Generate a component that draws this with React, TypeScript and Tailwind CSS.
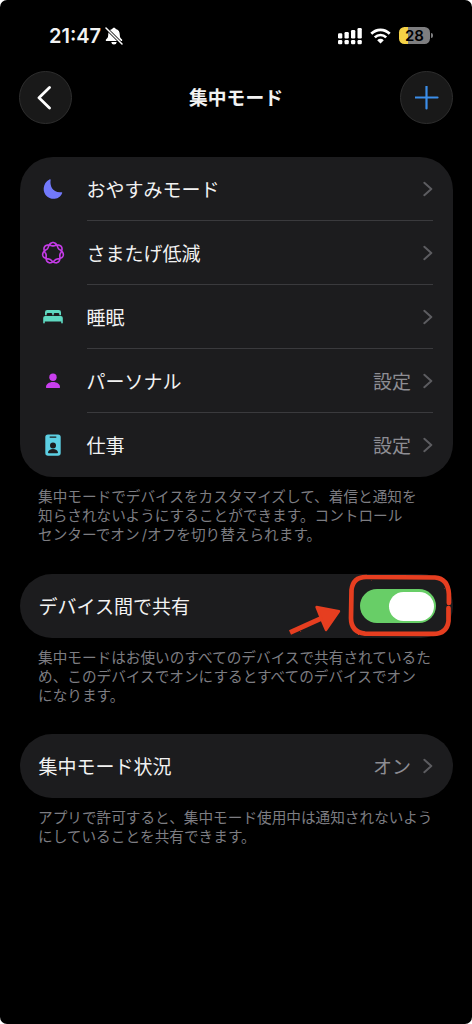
import type { ReactNode } from "react"

interface RowProps {
  icon: ReactNode
  label: string
  value?: string
  last?: boolean
}

// Closed curve that winds twice around the centre and makes seven lobes
function lobePath() {
  const points: string[] = []
  for (let i = 0; i < 240; i++) {
    const t = (i / 240) * Math.PI * 4
    const r = 8.8 + 1.7 * Math.cos(3.5 * t)
    points.push(`${(12 + r * Math.sin(t)).toFixed(2)} ${(12 - r * Math.cos(t)).toFixed(2)}`)
  }
  return `M${points.join("L")}Z`
}

function Chevron() {
  return (
    <svg className="h-4 w-[10px]" viewBox="0 0 10 16" fill="none">
      <path d="M1.3 1.8 8.3 8 1.3 14.2" stroke="#5c5c60" strokeWidth="2" strokeLinecap="round" strokeLinejoin="round" />
    </svg>
  )
}

function MoonIcon() {
  return (
    <svg className="h-6 w-6" viewBox="0 0 24 24" fill="#7279fb">
      <path d="M9.7 2.8C8.5 8.9 11.7 16.2 20.6 15.2c.5-.1.8.3.6.7C18.6 22.6 10.5 23.2 6.400 19.800 0.900 15.400 1.400 6 8.500 2.400c.6-.3 1.300-.1 1.200.4Z" />
    </svg>
  )
}

function FlowerIcon() {
  return (
    <svg className="h-6 w-6" viewBox="0 0 24 24" fill="none">
      <path d={lobePath()} stroke="#c43be6" strokeWidth="1.650" />
    </svg>
  )
}

function BedIcon() {
  return (
    <svg className="h-6 w-6" viewBox="0 0 24 24" fill="#5fd9c1">
      <path d="M4 10.300V7.200Q4 5 6.200 5h11.600Q20 5 20 7.200v3.100h-1.700V9.100Q18.300 8 17.200 8h-3.400q-1.100 0-1.100 1.100v1.200h-1.400V9.100q0-1.100-1.100-1.100H6.800Q5.700 8 5.700 9.100v1.200Z" />
      <path d="M2.200 13.100q0-2 2-2h15.600q2 0 2 2v4.600q0 .7-.8.700t-.8-.7v-1.100H3.800v1.100q0 .7-.8.700t-.8-.7Z" />
    </svg>
  )
}

function PersonIcon() {
  return (
    <svg className="h-6 w-6" viewBox="0 0 24 24" fill="#c93fee">
      <circle cx="12" cy="8.200" r="3.700" />
      <path d="M5 18.200c0-3 2.900-5.100 7-5.100s7 2.100 7 5.100q0 .9-1 .9H6q-1 0-1-.9Z" />
    </svg>
  )
}

function BadgeIcon() {
  return (
    <svg className="h-6 w-6" viewBox="0 0 24 24">
      <rect x="4.300" y="1.400" width="15.400" height="21.400" rx="2.700" fill="#5ccfe3" />
      <rect x="8.500" y="3.400" width="7" height="1.300" rx="0.650" fill="#1c1c1e" />
      <circle cx="12" cy="12.500" r="3" fill="#1c1c1e" />
      <path d="M7 19.600c.2-2.300 2.300-3.600 5-3.600s4.800 1.300 5 3.600q0 .7-.8.700H7.800q-.8 0-.8-.7Z" fill="#1c1c1e" />
    </svg>
  )
}

function Row({ icon, label, value, last }: RowProps) {
  return (
    <div className="flex h-16 items-center pl-[21px]">
      {icon}
      <div
        className={`ml-[22px] mr-[20px] flex h-full flex-1 items-center justify-between border-b pt-px ${
          last ? "border-transparent" : "border-[#3a3a3d]"
        }`}
      >
        <span className="pt-[5px]">{label}</span>
        <span className="flex items-center gap-[12px] text-[#8d8d93]">
          {value && <span className="pt-[5px]">{value}</span>}
          <Chevron />
        </span>
      </div>
    </div>
  )
}

function Note({ lines }: { lines: string[] }) {
  return (
    <div className="h-24 pl-[38px] pt-[10.500px] text-[14.650px] leading-[19.300px] [word-spacing:-2px] text-[#7d7d82]">
      {lines.map((line) => (
        <p key={line} className="whitespace-pre">
          {line}
        </p>
      ))}
    </div>
  )
}

function StatusBar() {
  return (
    <div className="flex h-[71px] items-center justify-between pl-[49px] pr-[39px]">
      <div className="flex items-center gap-[3px]">
        <span className="w-[53px] whitespace-nowrap font-[Inter] text-[20px] font-semibold">21:47</span>
        <svg className="h-[18px] w-[18px]" viewBox="0 0 18 18">
          <path d="M9 .8c-.9 0-1.500.5-1.700 1.300C4.400 2.800 3.200 5 3.200 7.700c0 2.600-.9 3.600-2 4.600-.8.800-.5 1.800.5 1.800h14.600c1 0 1.300-1 .5-1.800-1.100-1-2-2-2-4.600 0-2.700-1.200-4.900-4.100-5.600C10.500 1.300 9.900.8 9 .8ZM6.300 15h5.400c-.3 1.700-1.200 2.500-2.700 2.500S6.600 16.700 6.300 15Z" fill="white" />
          <path d="m1.200 1.200 15.600 15.600" stroke="black" strokeWidth="3" />
          <path d="m1 1 16 16" stroke="white" strokeWidth="1.500" strokeLinecap="round" />
        </svg>
      </div>
      <div className="flex items-center">
        <svg className="h-[18px] w-[24px]" viewBox="0 0 24 18" fill="white">
          <rect x="0" y="6.200" width="4.300" height="5.300" rx="1.200" />
          <rect x="6.500" y="5" width="4.300" height="6.500" rx="1.200" />
          <rect x="13" y="3" width="4.300" height="8.500" rx="1.200" />
          <rect x="19.500" y="1" width="4.300" height="10.500" rx="1.200" />
          <rect x="0" y="13" width="4.300" height="4.300" rx="1.200" />
          <rect x="6.500" y="13" width="4.300" height="4.300" rx="1.200" />
          <rect x="13" y="13" width="4.300" height="4.300" rx="1.200" />
          <rect x="19.500" y="13" width="4.300" height="4.300" rx="1.200" />
        </svg>
        <svg className="ml-[8px] h-[16px] w-[21px]" viewBox="0 0 21 16" fill="none" stroke="white" strokeWidth="2.700">
          <path d="M1.300 5.800C6.500.5 14.500.5 19.700 5.800" />
          <path d="M4.800 9.400c3.200-3.200 8.200-3.200 11.400 0" />
          <path d="m7.200 12.200 3.300 3.300 3.300-3.300c-1.900-1.800-4.700-1.800-6.600 0Z" fill="white" stroke="none" />
        </svg>
        <div className="ml-[8px] flex h-[17px] w-[31px] items-center justify-center rounded-[5.500px] bg-linear-to-r from-[#f5d246] from-28% to-[#7e7e80] to-28% font-[Inter] text-[15px] leading-[17px] font-semibold text-black">
          28
        </div>
        <div className="ml-px h-[5px] w-[2px] rounded-r-full bg-[#7e7e80]" />
      </div>
    </div>
  )
}

// Hand-drawn frame around the switch and the arrow that points at it
function Marker() {
  return (
    <svg className="pointer-events-none absolute right-0 top-0 h-16 w-[166px] overflow-visible" viewBox="0 0 166 64" fill="none">
      <defs>
        <filter id="crayon" x="-10%" y="-20%" width="120%" height="140%" colorInterpolationFilters="sRGB">
          <feTurbulence type="fractalNoise" baseFrequency="0.37" numOctaves="1" seed="4" result="noise" />
          <feDisplacementMap in="SourceGraphic" in2="noise" scale="1.800" xChannelSelector="R" yChannelSelector="G" />
        </filter>
      </defs>
      <g filter="url(#crayon)" stroke="#e63e20" strokeLinecap="round" strokeLinejoin="round">
        <path d="M161.900 29V20Q161 4.500 148 3.500L80 3Q66 2.500 64.500 16L64 44Q64 58 78 59.700L146 59.900Q160 60 161.500 47V34" strokeWidth="4.700" />
        <path d="M3 58.500 34 44.500" strokeWidth="5" strokeLinecap="butt" />
        <path d="M29.500 33 52 37.300 39 56 34.500 45.500Z" fill="#e63e20" strokeWidth="2.400" />
      </g>
    </svg>
  )
}

export default function App() {
  return (
    <div className="bg-white">
      <div className="h-[1024px] w-[472px] overflow-hidden rounded-[7px] bg-black font-['Inter','Noto_Sans_CJK_JP',sans-serif] text-[19px] text-[#f2f2f2]">
        <StatusBar />
        <header className="flex h-[53px] items-center justify-between px-[19px]">
          <button className="flex h-[53px] w-[53px] items-center justify-center rounded-full border border-[#2e2e2e] bg-[#191919]">
            <svg className="h-6 w-6" viewBox="0 0 24 24" fill="none">
              <path d="M15.500 1.500 5 11.700 15.500 21.900" stroke="white" strokeWidth="2.800" strokeLinecap="round" strokeLinejoin="round" />
            </svg>
          </button>
          <h1 className="pt-[4px] text-[18.800px] font-bold">集中モード</h1>
          <button className="flex h-[53px] w-[53px] items-center justify-center rounded-full border border-[#2e2e2e] bg-[#191919]">
            <svg className="h-6 w-6" viewBox="0 0 24 24" fill="none">
              <path d="M11.500 .5v22M.5 11.500h22" stroke="#3b8eea" strokeWidth="2.200" strokeLinecap="round" />
            </svg>
          </button>
        </header>

        <main className="pl-[19.500px] pr-[19px] pt-[33px]">
          <section className="rounded-[33px] bg-[#1c1c1e]">
            <Row icon={<MoonIcon />} label="おやすみモード" />
            <Row icon={<FlowerIcon />} label="さまたげ低減" />
            <Row icon={<BedIcon />} label="睡眠" />
            <Row icon={<PersonIcon />} label="パーソナル" value="設定" />
            <Row icon={<BadgeIcon />} label="仕事" value="設定" last />
          </section>
          <div className="-ml-[19.500px] mb-px">
            <Note
              lines={[
                "集中モードでデバイスをカスタマイズして、着信と通知を",
                "知らされないようにすることができます。コントロール",
                "センターでオン /オフを切り替えられます。",
              ]}
            />
          </div>

          <section className="relative flex h-16 items-center justify-between rounded-full bg-[#1c1c1e] pl-[19px] pr-[17px]">
            <span className="pt-[4px]">デバイス間で共有</span>
            <div className="flex h-[34px] w-[76px] items-center justify-end rounded-full bg-[#68ce67] p-[2px]">
              <div className="h-[29px] w-[45px] rounded-full bg-white" />
            </div>
            <Marker />
          </section>
          <div className="-ml-[19.500px]">
            <Note
              lines={[
                "集中モードはお使いのすべてのデバイスで共有されているた",
                "め、このデバイスでオンにするとすべてのデバイスでオン",
                "になります。",
              ]}
            />
          </div>

          <section className="flex h-16 items-center justify-between rounded-full bg-[#1c1c1e] pl-[19px] pr-[20px]">
            <span className="pt-[4px]">集中モード状況</span>
            <span className="flex items-center gap-[12px] text-[#8d8d93]">
              <span className="pt-[4px]">オン</span>
              <Chevron />
            </span>
          </section>
          <div className="-ml-[19.500px]">
            <Note
              lines={[
                "アプリで許可すると、集中モード使用中は通知されないよう",
                "にしていることを共有できます。",
              ]}
            />
          </div>
        </main>
      </div>
    </div>
  )
}
